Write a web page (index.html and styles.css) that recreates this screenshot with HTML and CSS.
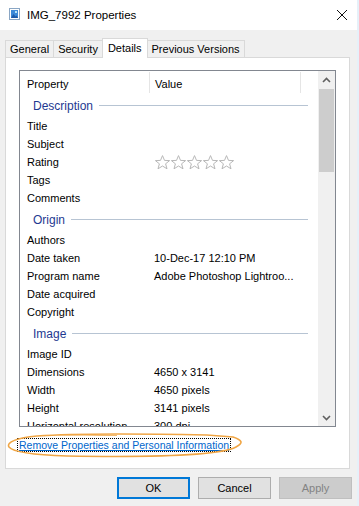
FILE: index.html
```html
<!DOCTYPE html>
<html lang="en">
<head>
    <meta charset="UTF-8">
    <meta name="viewport" content="width=device-width, initial-scale=1.0">
    <title>IMG_7992 Properties</title>
    <link rel="stylesheet" href="styles.css">
</head>
<body>
  <div class="window">
    <div class="titlebar">
      <svg class="file-icon" width="11" height="12" viewBox="0 0 11 12">
        <rect x="0.5" y="0.5" width="10" height="11" fill="#fff" stroke="#8aa6c4"/>
        <rect x="2" y="2" width="7" height="8" fill="#3d8ad8"/>
        <path d="M2 10 L4.5 6 L6.5 8.5 L7.5 7.5 L9 10 Z" fill="#1d5aa8"/>
        <circle cx="7" cy="4" r="1" fill="#dff"/>
      </svg>
      <span class="title">IMG_7992 Properties</span>
      <svg class="close" width="12" height="12" viewBox="0 0 12 12">
        <path d="M1 1 L11 11 M11 1 L1 11" stroke="#111" stroke-width="1"/>
      </svg>
    </div>

    <div class="tabs">
      <span class="tab">General</span>
      <span class="tab">Security</span>
      <span class="tab selected">Details</span>
      <span class="tab">Previous Versions</span>
    </div>

    <div class="panel">
      <div class="listbox">
        <div class="list">
          <div class="head">
            <span class="col-prop">Property</span>
            <span class="col-val">Value</span>
            <span class="col-rest"></span>
          </div>

          <div class="group"><span>Description</span><i></i></div>
          <div class="row"><span class="col-prop">Title</span><span class="col-val"></span></div>
          <div class="row"><span class="col-prop">Subject</span><span class="col-val"></span></div>
          <div class="row">
            <span class="col-prop">Rating</span>
            <span class="col-val stars">
              <svg width="82" height="15" viewBox="0 0 82 15">
                <g fill="none" stroke="#b8b8b8" stroke-width="1">
                  <polygon points="7.5,0.6 9.5,5.4 14.6,5.6 10.6,8.8 12,13.8 7.5,11 3,13.8 4.4,8.8 0.4,5.6 5.5,5.4"/>
                  <polygon transform="translate(16 0)" points="7.5,0.6 9.5,5.4 14.6,5.6 10.6,8.8 12,13.8 7.5,11 3,13.8 4.4,8.8 0.4,5.6 5.5,5.4"/>
                  <polygon transform="translate(32 0)" points="7.5,0.6 9.5,5.4 14.6,5.6 10.6,8.8 12,13.8 7.5,11 3,13.8 4.4,8.8 0.4,5.6 5.5,5.4"/>
                  <polygon transform="translate(48 0)" points="7.5,0.6 9.5,5.4 14.6,5.6 10.6,8.8 12,13.8 7.5,11 3,13.8 4.4,8.8 0.4,5.6 5.5,5.4"/>
                  <polygon transform="translate(64 0)" points="7.5,0.6 9.5,5.4 14.6,5.6 10.6,8.8 12,13.8 7.5,11 3,13.8 4.4,8.8 0.4,5.6 5.5,5.4"/>
                </g>
              </svg>
            </span>
          </div>
          <div class="row"><span class="col-prop">Tags</span><span class="col-val"></span></div>
          <div class="row"><span class="col-prop">Comments</span><span class="col-val"></span></div>

          <div class="group"><span>Origin</span><i></i></div>
          <div class="row"><span class="col-prop">Authors</span><span class="col-val"></span></div>
          <div class="row"><span class="col-prop">Date taken</span><span class="col-val">10-Dec-17 12:10 PM</span></div>
          <div class="row"><span class="col-prop">Program name</span><span class="col-val">Adobe Photoshop Lightroo...</span></div>
          <div class="row"><span class="col-prop">Date acquired</span><span class="col-val"></span></div>
          <div class="row"><span class="col-prop">Copyright</span><span class="col-val"></span></div>

          <div class="group"><span>Image</span><i></i></div>
          <div class="row"><span class="col-prop">Image ID</span><span class="col-val"></span></div>
          <div class="row"><span class="col-prop">Dimensions</span><span class="col-val">4650 x 3141</span></div>
          <div class="row"><span class="col-prop">Width</span><span class="col-val">4650 pixels</span></div>
          <div class="row"><span class="col-prop">Height</span><span class="col-val">3141 pixels</span></div>
          <div class="row"><span class="col-prop">Horizontal resolution</span><span class="col-val">300 dpi</span></div>
          <div class="row"><span class="col-prop">Vertical resolution</span><span class="col-val">300 dpi</span></div>
        </div>

        <div class="scrollbar">
          <span class="arrow">
            <svg width="9" height="6" viewBox="0 0 9 6"><path d="M1 5 L4.5 1.5 L8 5" fill="none" stroke="#606060" stroke-width="1.6"/></svg>
          </span>
          <span class="track"><span class="thumb"></span></span>
          <span class="arrow">
            <svg width="9" height="6" viewBox="0 0 9 6"><path d="M1 1 L4.5 4.5 L8 1" fill="none" stroke="#606060" stroke-width="1.6"/></svg>
          </span>
        </div>
      </div>

      <div class="link-line">
        <a class="remove-link" href="#">Remove Properties and Personal Information</a>
        <svg class="scribble" width="240" height="28" viewBox="0 0 240 28">
          <path d="M30 4 C70 1 150 2 200 3 L226 5 C235 8 237 11 229 15 C210 25 120 25 60 24 C30 23 6 20 2 15 C-1 10 10 6 30 4 C60 2 90 3 110 3"
                fill="none" stroke="#f0a646" stroke-width="1.6"/>
        </svg>
      </div>
    </div>

    <div class="buttons">
      <button class="btn default">OK</button>
      <button class="btn">Cancel</button>
      <button class="btn disabled">Apply</button>
    </div>
  </div>
</body>
</html>
```

FILE: styles.css
```css
html, body {
    margin: 0;
    padding: 0;
}

body {
    background: #e6f0f9;
    font-family: "Liberation Sans", Arial, sans-serif;
    font-size: 11px;
    color: #000;
}

.window {
    width: 357px;
    height: 506px;
    background: #f0f0f0;
    overflow: hidden;
}

.titlebar {
    height: 30px;
    background: #fff;
    display: flex;
    align-items: center;
    padding-left: 9px;
    box-sizing: border-box;
}

.titlebar .file-icon {
    margin-top: -2px;
}

.titlebar .title {
    margin-left: 7px;
    font-size: 11.5px;
    color: #000;
    flex: 1;
}

.titlebar .close {
    margin-right: 9px;
}

.tabs {
    display: flex;
    align-items: flex-end;
    height: 27px;
    padding-left: 5px;
}

.tab {
    height: 16px;
    line-height: 16px;
    padding: 0 4px;
    border: 1px solid #d9d9d9;
    border-bottom: none;
    margin-right: -1px;
    background: #f0f0f0;
    font-size: 11px;
}

.tab.selected {
    height: 19px;
    line-height: 18px;
    background: #fff;
    position: relative;
    z-index: 1;
    margin-bottom: -1px;
    padding: 0 5px;
}

.panel {
    margin: 0 7px 0 5px;
    height: 412px;
    box-sizing: border-box;
    border: 1px solid #d9d9d9;
    background: #fff;
    padding: 12px 13px 0 13px;
}

.listbox {
    height: 357px;
    box-sizing: border-box;
    border: 1px solid #828790;
    display: flex;
}

.list {
    flex: 1;
    overflow: hidden;
}

.head {
    display: flex;
    height: 22px;
    align-items: stretch;
}

.head span {
    display: flex;
    align-items: center;
    padding-top: 2px;
}

.head .col-prop {
    border-right: 1px solid #e5e5e5;
    margin-top: 1px;
}

.head .col-val {
    border-right: 1px solid #e5e5e5;
    width: 145px;
    margin-top: 1px;
}

.col-prop {
    width: 122px;
    padding-left: 7px;
    flex: none;
    white-space: nowrap;
}

.col-val {
    padding-left: 5px;
    white-space: nowrap;
}

.row {
    display: flex;
    height: 18px;
    align-items: center;
}

.stars svg {
    display: block;
    margin-left: 1px;
}

.group {
    height: 24px;
    display: flex;
    align-items: center;
    padding: 0 10px 0 13px;
}

.group span {
    font-size: 12px;
    color: #1e3991;
    padding-top: 1px;
}

.group i {
    flex: 1;
    height: 1px;
    background: #b7c4d3;
    margin-left: 6px;
    margin-top: 1px;
}

.scrollbar {
    width: 17px;
    background: #f0f0f0;
    display: flex;
    flex-direction: column;
}

.scrollbar .arrow {
    height: 17px;
    display: flex;
    align-items: center;
    justify-content: center;
}

.scrollbar .track {
    flex: 1;
    padding-top: 1px;
}

.scrollbar .thumb {
    display: block;
    height: 83px;
    background: #cdcdcd;
    margin: 0 1px;
}

.link-line {
    position: relative;
    margin-top: 12px;
}

.remove-link {
    color: #0066cc;
    font-size: 10.5px;
    text-decoration: underline;
    outline: 1px dotted #000;
    outline-offset: 0;
    padding: 0 1px;
    margin-left: -1px;
}

.scribble {
    position: absolute;
    left: -12px;
    top: -7px;
    pointer-events: none;
}

.buttons {
    display: flex;
    justify-content: flex-end;
    gap: 8px;
    padding: 8px 5px 0 0;
}

.btn {
    width: 73px;
    height: 22px;
    box-sizing: border-box;
    font-family: "Liberation Sans", Arial, sans-serif;
    font-size: 11px;
    background: #e1e1e1;
    border: 1px solid #adadad;
    color: #000;
    padding: 0;
}

.btn.default {
    border: 2px solid #0078d7;
}

.btn.disabled {
    background: #cccccc;
    border-color: #bfbfbf;
    color: #838383;
}
```
